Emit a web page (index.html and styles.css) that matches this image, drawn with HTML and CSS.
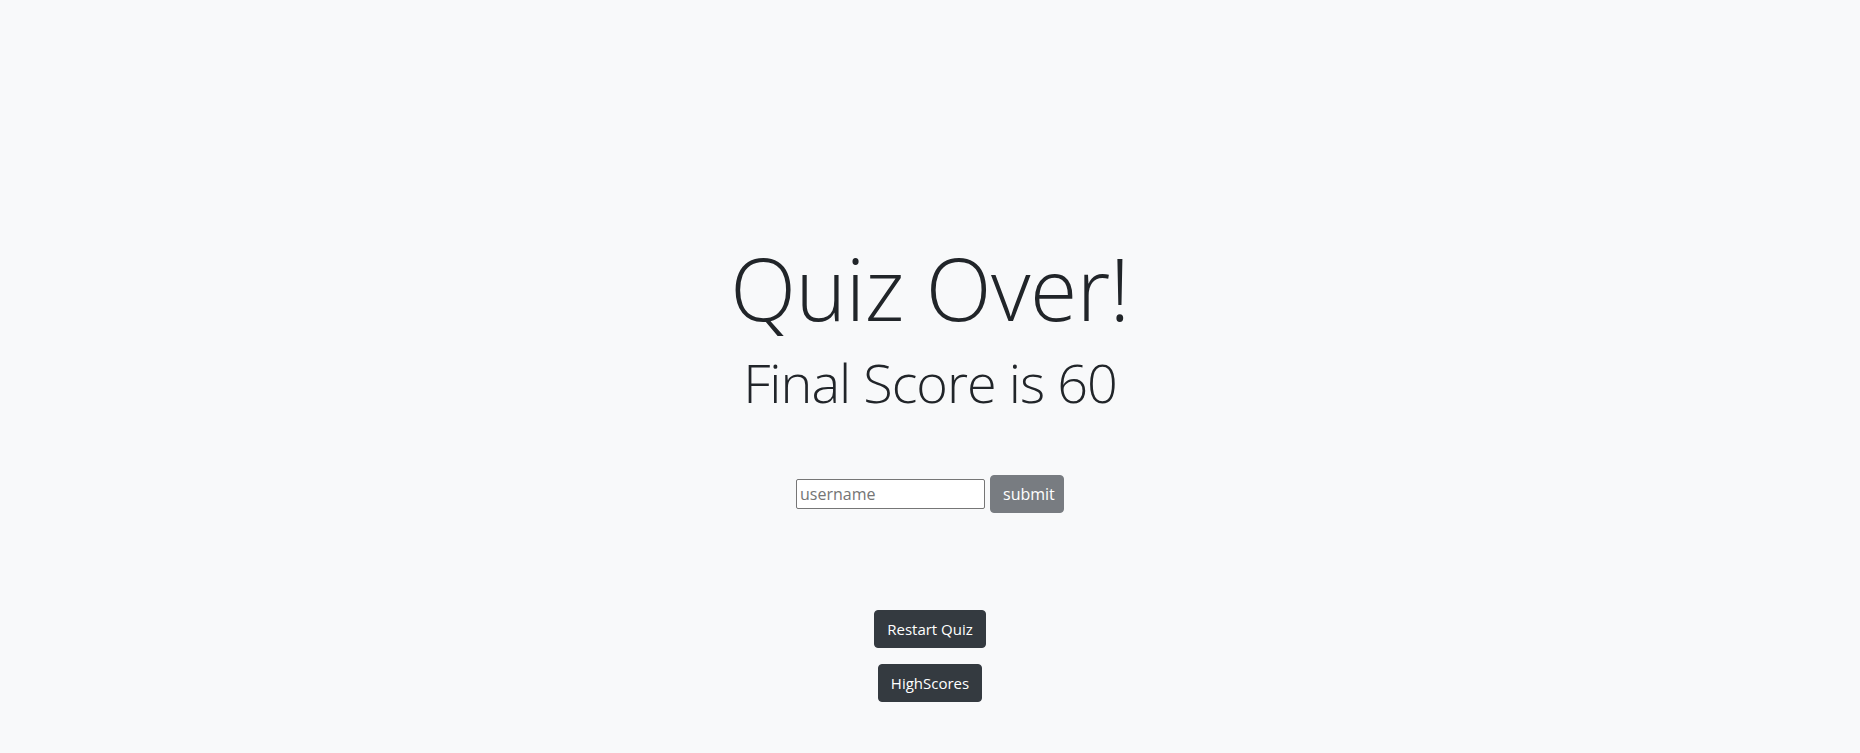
FILE: index.html
```html
<!DOCTYPE html>
<html lang="en">
<head>
<meta charset="utf-8">
<title>Quiz Over</title>
<link rel="stylesheet" href="styles.css">
</head>
<body>
<main class="page">
  <h1 class="title">Quiz Over!</h1>
  <h2 class="score">Final Score is 60</h2>
  <form class="score-form">
    <input class="name-input" type="text" placeholder="username">
    <button class="btn btn-secondary" type="button">submit</button>
  </form>
  <div class="actions">
    <button class="btn btn-dark" type="button">Restart Quiz</button>
    <button class="btn btn-dark" type="button">HighScores</button>
  </div>
</main>
</body>
</html>
```
FILE: styles.css
```css
html, body {
  margin: 0;
  padding: 0;
  background: #f8f9fa;
  color: #212529;
  font-family: "Open Sans", "Noto Sans", sans-serif;
}
.page {
  display: flex;
  flex-direction: column;
  align-items: center;
  padding-top: 236px;
  height: 753px;
  box-sizing: border-box;
}
.title {
  margin: 0 0 11px;
  font-size: 86px;
  font-weight: 300;
  line-height: 1.2;
  letter-spacing: -0.5px;
}
.score {
  margin: 0;
  font-size: 54px;
  font-weight: 300;
  line-height: 1.2;
  letter-spacing: -1px;
}
.score-form {
  display: flex;
  align-items: center;
  gap: 5px;
  margin-top: 60px;
}
.name-input {
  width: 189px;
  height: 30px;
  box-sizing: border-box;
  border: 1px solid #767676;
  border-radius: 2px;
  background: #fff;
  padding: 1px 3px;
  font-family: inherit;
  font-size: 16px;
  color: #212529;
}
.name-input::placeholder {
  color: #757575;
}
.btn {
  height: 38px;
  box-sizing: border-box;
  border: 1px solid transparent;
  border-radius: 4px;
  padding: 0 12px;
  font-family: inherit;
  font-size: 15px;
  line-height: 1.5;
  color: #fff;
}
.btn-secondary {
  background: #787c81;
  border-color: #787c81;
  width: 74px;
  font-size: 16px;
}
.btn-dark {
  background: #343a40;
  border-color: #343a40;
}
.actions {
  display: flex;
  flex-direction: column;
  align-items: center;
  gap: 16px;
  margin-top: 97px;
}
```
